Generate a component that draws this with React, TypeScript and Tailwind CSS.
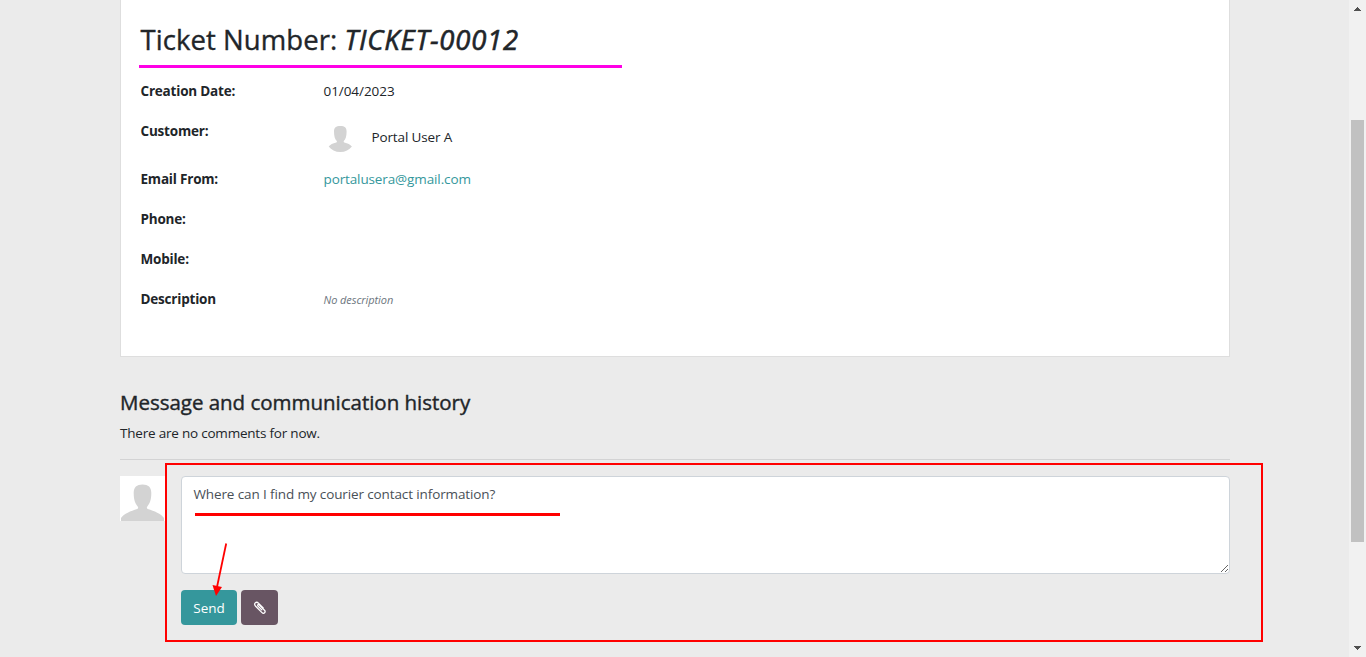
import type { ReactNode } from 'react';

function Silhouette({ className }: { className: string }) {
  return (
    <svg viewBox="0 0 45 45" className={className} aria-hidden="true">
      <path
        fill="#d3d3d3"
        d="M22.500 8.500c5.800 0 8.800 2.700 8.800 8.500 0 7-1.500 10.500-4 13.500-.8 1.200-.5 2.200.5 2.600 6.500 1.900 13.200 4.900 16.200 8.900V45H1v-3c3-4 9.700-7 16.200-8.900 1-.4 1.300-1.400.5-2.600-2.500-3-4-6.500-4-13.500 0-5.800 3-8.500 8.800-8.500z"
      />
    </svg>
  );
}

function SmallSilhouette() {
  return (
    <svg viewBox="0 0 32 32" className="size-8 shrink-0" aria-hidden="true">
      <path
        fill="#d3d3d3"
        d="M16.300 5c4.300 0 6.300 1.700 6.300 5.500 0 5-1 7.500-2.800 9.500-.3.700 0 1.200.5 1.500 3.500.8 6 2.100 7.600 4-2.600 3.500-6.600 5.500-11.600 5.500s-9-2-11.600-5.500c1.600-1.900 4.100-3.200 7.600-4 .5-.3.800-.8.5-1.500-1.800-2-2.800-4.500-2.800-9.500 0-3.800 2-5.500 6.300-5.500z"
      />
    </svg>
  );
}

function Row({ label, children }: { label: string; children?: ReactNode }) {
  return (
    <div className="mb-[19px] flex min-h-[21px]">
      <div className="w-[183px] shrink-0 font-bold tracking-[-0.2px]">{label}</div>
      <div>{children}</div>
    </div>
  );
}

function Scrollbar() {
  return (
    <div className="flex w-[17px] shrink-0 flex-col items-center bg-[#f1f1f1]">
      <svg viewBox="0 0 17 17" className="size-[17px]" shapeRendering="crispEdges" aria-hidden="true">
        <path fill="#505050" d="M5 11h7v-1h-1V9h-1V8H9V7H8v1H7v1H6v1H5z" />
      </svg>
      <div className="mt-[103px] h-[422px] w-[13px] bg-[#c1c1c1]" />
      <svg viewBox="0 0 17 17" className="mt-auto size-[17px]" shapeRendering="crispEdges" aria-hidden="true">
        <path fill="#505050" d="M5 6h7v1h-1v1h-1v1H9v1H8V9H7V8H6V7H5z" />
      </svg>
    </div>
  );
}

export default function App() {
  return (
    <div className="relative flex h-[657px] w-[1366px] overflow-hidden bg-[#ebebeb] font-['Open_Sans',sans-serif] text-[13.5px] leading-[21px] text-[#212529]">
      <main className="flex-1 pl-[120px]">
        <section className="h-[357px] w-[1110px] border border-t-0 border-[#dedede] bg-white px-[19.5px] pt-[23px]">
          <h1 className="h-[35px] whitespace-nowrap text-[27.5px] leading-[34px]">
            <span className="tracking-[0.07px] [-webkit-text-stroke:0.35px_#212529]">Ticket Number: </span>
            <em className="tracking-[0.78px] [-webkit-text-stroke:0.6px_#212529]">TICKET-00012</em>
          </h1>
          <div className="mt-[23px]">
            <Row label="Creation Date:"><span className="tracking-[-0.06px]">01/04/2023</span></Row>
            <div className="mb-[11px] flex h-[37px]">
              <div className="w-[183px] shrink-0 font-bold tracking-[-0.2px]">Customer:</div>
              <div className="flex h-8 items-center gap-4">
                <SmallSilhouette />
                <span className="tracking-[-0.13px]">Portal User A</span>
              </div>
            </div>
            <Row label="Email From:">
              <a className="tracking-[-0.12px] text-[#35979c]">portalusera@gmail.com</a>
            </Row>
            <Row label="Phone:" />
            <Row label="Mobile:" />
            <Row label="Description">
              <em className="text-[11px] tracking-[-0.08px] text-[#6c757d]">No description</em>
            </Row>
          </div>
        </section>

        <section className="w-[1110px]">
          <h2 className="mt-8 h-[27px] text-[20.5px] leading-[27px] tracking-[-0.02px] [-webkit-text-stroke:0.4px_#212529]">
            Message and communication history
          </h2>
          <p className="mt-[7px] tracking-[-0.21px]">There are no comments for now.</p>
          <hr className="mt-[15px] border-[#d3d3d4]" />
          <div className="mt-4 flex">
            <div className="size-[45px] shrink-0 bg-white">
              <Silhouette className="size-[45px]" />
            </div>
            <div className="ml-4 flex-1">
              <textarea
                className="block h-[98px] w-full resize-y rounded-[4px] border border-[#ced4da] bg-white px-[11.5px] py-[7px] tracking-[-0.12px] text-[#495057] outline-none"
                defaultValue="Where can I find my courier contact information?"
              />
              <div className="mt-4 flex gap-1">
                <button className="h-[35px] w-14 rounded-[4px] bg-[#35979c] pt-px text-white">Send</button>
                <button aria-label="Attach" className="flex h-[35px] w-[37px] items-center justify-center rounded-[4px] bg-[#685563]">
                  <svg viewBox="0 0 14 14" className="size-[14px]" fill="none" stroke="white" strokeWidth="1.300" strokeLinecap="round" aria-hidden="true">
                    <path d="M8.800 8.900 5 5.100c-.9-.9.300-2.100 1.200-1.200l5.300 5.300c1.800 1.800-.7 4.200-2.500 2.400L2.400 5C.2 2.800 3.200-.1 5.400 2.100l4.800 4.800" />
                  </svg>
                </button>
              </div>
            </div>
          </div>
        </section>
      </main>
      <Scrollbar />

      <div className="absolute left-[139px] top-[65px] h-[3px] w-[483px] bg-[#ff00e6]" />
      <div className="absolute left-[165px] top-[463px] h-[179px] w-[1098px] border-2 border-[#ff0000]" />
      <div className="absolute left-[195px] top-[513px] h-[3px] w-[365px] bg-[#ff0000]" />
      <svg viewBox="0 0 20 56" className="absolute left-[210px] top-[541px] h-14 w-5" aria-hidden="true">
        <path d="M16.200 2.500 7 46" stroke="#ff0000" strokeWidth="1.800" />
        <path d="m2.500 44 9.500 2-6 9z" fill="#ff0000" />
      </svg>
    </div>
  );
}
